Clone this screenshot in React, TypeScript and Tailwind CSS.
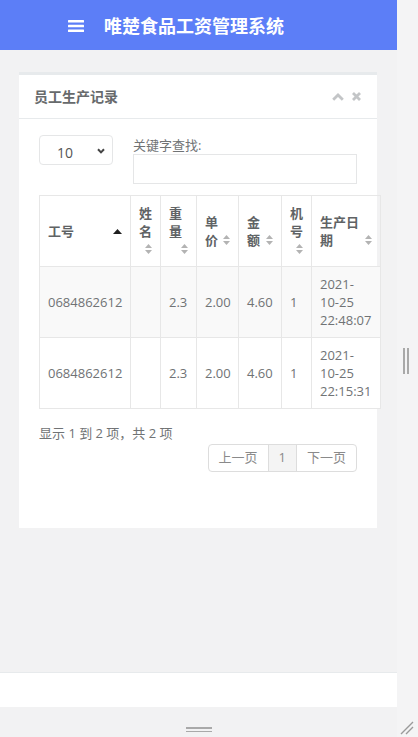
import type { ReactNode } from 'react';

const FONT = "font-['Open_Sans','Noto_Sans_CJK_SC',sans-serif]";

function SortBoth() {
  return (
    <svg width="7" height="10" viewBox="0 0 7 10" className="block shrink-0">
      <path d="M0 4L3.5 0L7 4Z M0 6L3.5 10L7 6Z" fill="#b3b3b3" />
    </svg>
  );
}

function SortAsc() {
  return (
    <svg width="9" height="5" viewBox="0 0 9 5" className="block shrink-0">
      <path d="M0 5L4.5 0L9 5Z" fill="#1f1f1f" />
    </svg>
  );
}

// header cell: icon goes on its own line, right aligned
function StackedHead({ chars }: { chars: string[] }) {
  return (
    <>
      {chars.map((c) => (
        <div key={c}>{c}</div>
      ))}
      <div className="flex h-[18px] items-center justify-end">
        <SortBoth />
      </div>
    </>
  );
}

// header cell: icon sits at the right of the last line
function InlineHead({ first, last }: { first: string; last: string }) {
  return (
    <>
      <div>{first}</div>
      <div className="flex items-center justify-between">
        <span>{last}</span>
        <SortBoth />
      </div>
    </>
  );
}

function Th({ children }: { children: ReactNode }) {
  return (
    <th className="border border-[#e7e7e7] px-2 py-2 text-left align-middle font-semibold text-[#606365]">
      {children}
    </th>
  );
}

function Td({ children }: { children: ReactNode }) {
  return <td className="border border-[#e7e7e7] px-2 py-2 align-middle">{children}</td>;
}

const ROWS = [
  { id: '0684862612', name: '', weight: '2.3', price: '2.00', amount: '4.60', machine: '1', date: ['2021-', '10-25', '22:48:07'] },
  { id: '0684862612', name: '', weight: '2.3', price: '2.00', amount: '4.60', machine: '1', date: ['2021-', '10-25', '22:15:31'] },
];

export default function App() {
  return (
    <div className={`${FONT} relative flex h-[737px] w-[418px] overflow-hidden bg-[#f4f4f5] text-[13px] text-[#707375]`}>
      <div className="flex w-[397px] flex-col bg-[#f2f2f3]">
        <header className="flex h-[50px] shrink-0 items-center gap-5 bg-[#5c7ef7] pl-[68px] pt-[1px]">
          <svg width="16" height="12" viewBox="0 0 16 12">
            <rect x="0" y="0" width="16" height="2.5" rx="0.5" fill="#fff" />
            <rect x="0" y="4.75" width="16" height="2.5" rx="0.5" fill="#fff" />
            <rect x="0" y="9.5" width="16" height="2.5" rx="0.5" fill="#fff" />
          </svg>
          <h1 className="text-[18px] font-bold leading-none text-white">唯楚食品工资管理系统</h1>
        </header>

        <main className="h-[622px] shrink-0 px-[19px] pt-[22px]">
          <section className="w-[358px] border-t-[3px] border-[#e7eaec] bg-white">
            <div className="flex h-[44px] items-center justify-between border-b border-[#e7eaec] pl-[15px] pr-[16px]">
              <h2 className="text-[14px] font-bold text-[#676a6c]">员工生产记录</h2>
              <div className="flex items-center gap-2">
                <svg width="12" height="8" viewBox="0 0 12 8">
                  <path d="M1.2 6.8L6 2L10.8 6.8" stroke="#c3c5c7" strokeWidth="2.8" fill="none" />
                </svg>
                <svg width="9" height="9" viewBox="0 0 9 9">
                  <path d="M1 1L8 8M8 1L1 8" stroke="#c3c5c7" strokeWidth="2.8" />
                </svg>
              </div>
            </div>

            <div className="px-5 pb-[56px] pt-4">
              <div className="flex gap-5">
                <div className="flex h-[30px] w-[74px] items-center justify-between rounded-sm border border-[#e5e6e7] pl-[17px] pr-[7px] pt-[5px] text-[14px] text-[#555]">
                  <span>10</span>
                  <svg width="8" height="6" viewBox="0 0 8 6" className="-mt-[3px]">
                    <path d="M1 1.2L4 4.4L7 1.2" stroke="#444" strokeWidth="2" fill="none" />
                  </svg>
                </div>
                <div className="flex flex-1 flex-col pt-px">
                  <label className="leading-[18px]">关键字查找:</label>
                  <div className="h-[30px] w-[224px] border border-[#e5e6e7]" />
                </div>
              </div>

              <table className="mt-[11px] w-[341px] table-fixed border-collapse leading-[18px]">
                <colgroup>
                  <col className="w-[91px]" />
                  <col className="w-[30px]" />
                  <col className="w-[36px]" />
                  <col className="w-[42px]" />
                  <col className="w-[43px]" />
                  <col className="w-[30px]" />
                  <col className="w-[69px]" />
                </colgroup>
                <thead>
                  <tr>
                    <Th>
                      <div className="flex items-center justify-between">
                        <span>工号</span>
                        <SortAsc />
                      </div>
                    </Th>
                    <Th>
                      <StackedHead chars={['姓', '名']} />
                    </Th>
                    <Th>
                      <StackedHead chars={['重', '量']} />
                    </Th>
                    <Th>
                      <InlineHead first="单" last="价" />
                    </Th>
                    <Th>
                      <InlineHead first="金" last="额" />
                    </Th>
                    <Th>
                      <StackedHead chars={['机', '号']} />
                    </Th>
                    <Th>
                      <InlineHead first="生产日" last="期" />
                    </Th>
                  </tr>
                </thead>
                <tbody>
                  {ROWS.map((r, i) => (
                    <tr key={i} className={i === 0 ? 'bg-[#f9f9f9]' : 'bg-white'}>
                      <Td>{r.id}</Td>
                      <Td>{r.name}</Td>
                      <Td>{r.weight}</Td>
                      <Td>{r.price}</Td>
                      <Td>{r.amount}</Td>
                      <Td>{r.machine}</Td>
                      <Td>
                        {r.date.map((d) => (
                          <div key={d}>{d}</div>
                        ))}
                      </Td>
                    </tr>
                  ))}
                </tbody>
              </table>

              <div className="mt-[15px] leading-[18px]">显示 1 到 2 项，共 2 项</div>
              <div className="mt-[2px] flex justify-end">
                <div className="flex h-[28px] overflow-hidden rounded border border-[#dddddd] text-[#8a8a8a]">
                  <span className="flex items-center px-[10px]">上一页</span>
                  <span className="flex items-center border-l border-[#dddddd] bg-[#f4f4f4] px-[10px]">1</span>
                  <span className="flex items-center border-l border-[#dddddd] px-[10px]">下一页</span>
                </div>
              </div>
            </div>
          </section>
        </main>

        <footer className="h-[35px] shrink-0 border-t border-[#e7eaec] bg-white" />
        <div className="flex h-[30px] shrink-0 items-end justify-center pb-[5px] pl-[1px]">
          <div className="flex w-[26px] flex-col gap-[2px]">
            <div className="h-[1.5px] bg-[#a9a9a9]" />
            <div className="h-[1.5px] bg-[#a9a9a9]" />
          </div>
        </div>
      </div>

      <aside className="relative w-[21px]">
        {/* side resize grip */}
        <div className="absolute left-[6px] top-[348px] flex gap-[2px]">
          <div className="h-[26px] w-[2px] bg-[#a9a9a9]" />
          <div className="h-[26px] w-[2px] bg-[#a9a9a9]" />
        </div>
        {/* corner resize grip */}
        <svg width="14" height="14" viewBox="0 0 14 14" className="absolute bottom-[2px] right-[4px]">
          <path d="M1 13L13 1M6 13L13 6" stroke="#9a9a9a" strokeWidth="1.4" />
        </svg>
      </aside>
    </div>
  );
}
